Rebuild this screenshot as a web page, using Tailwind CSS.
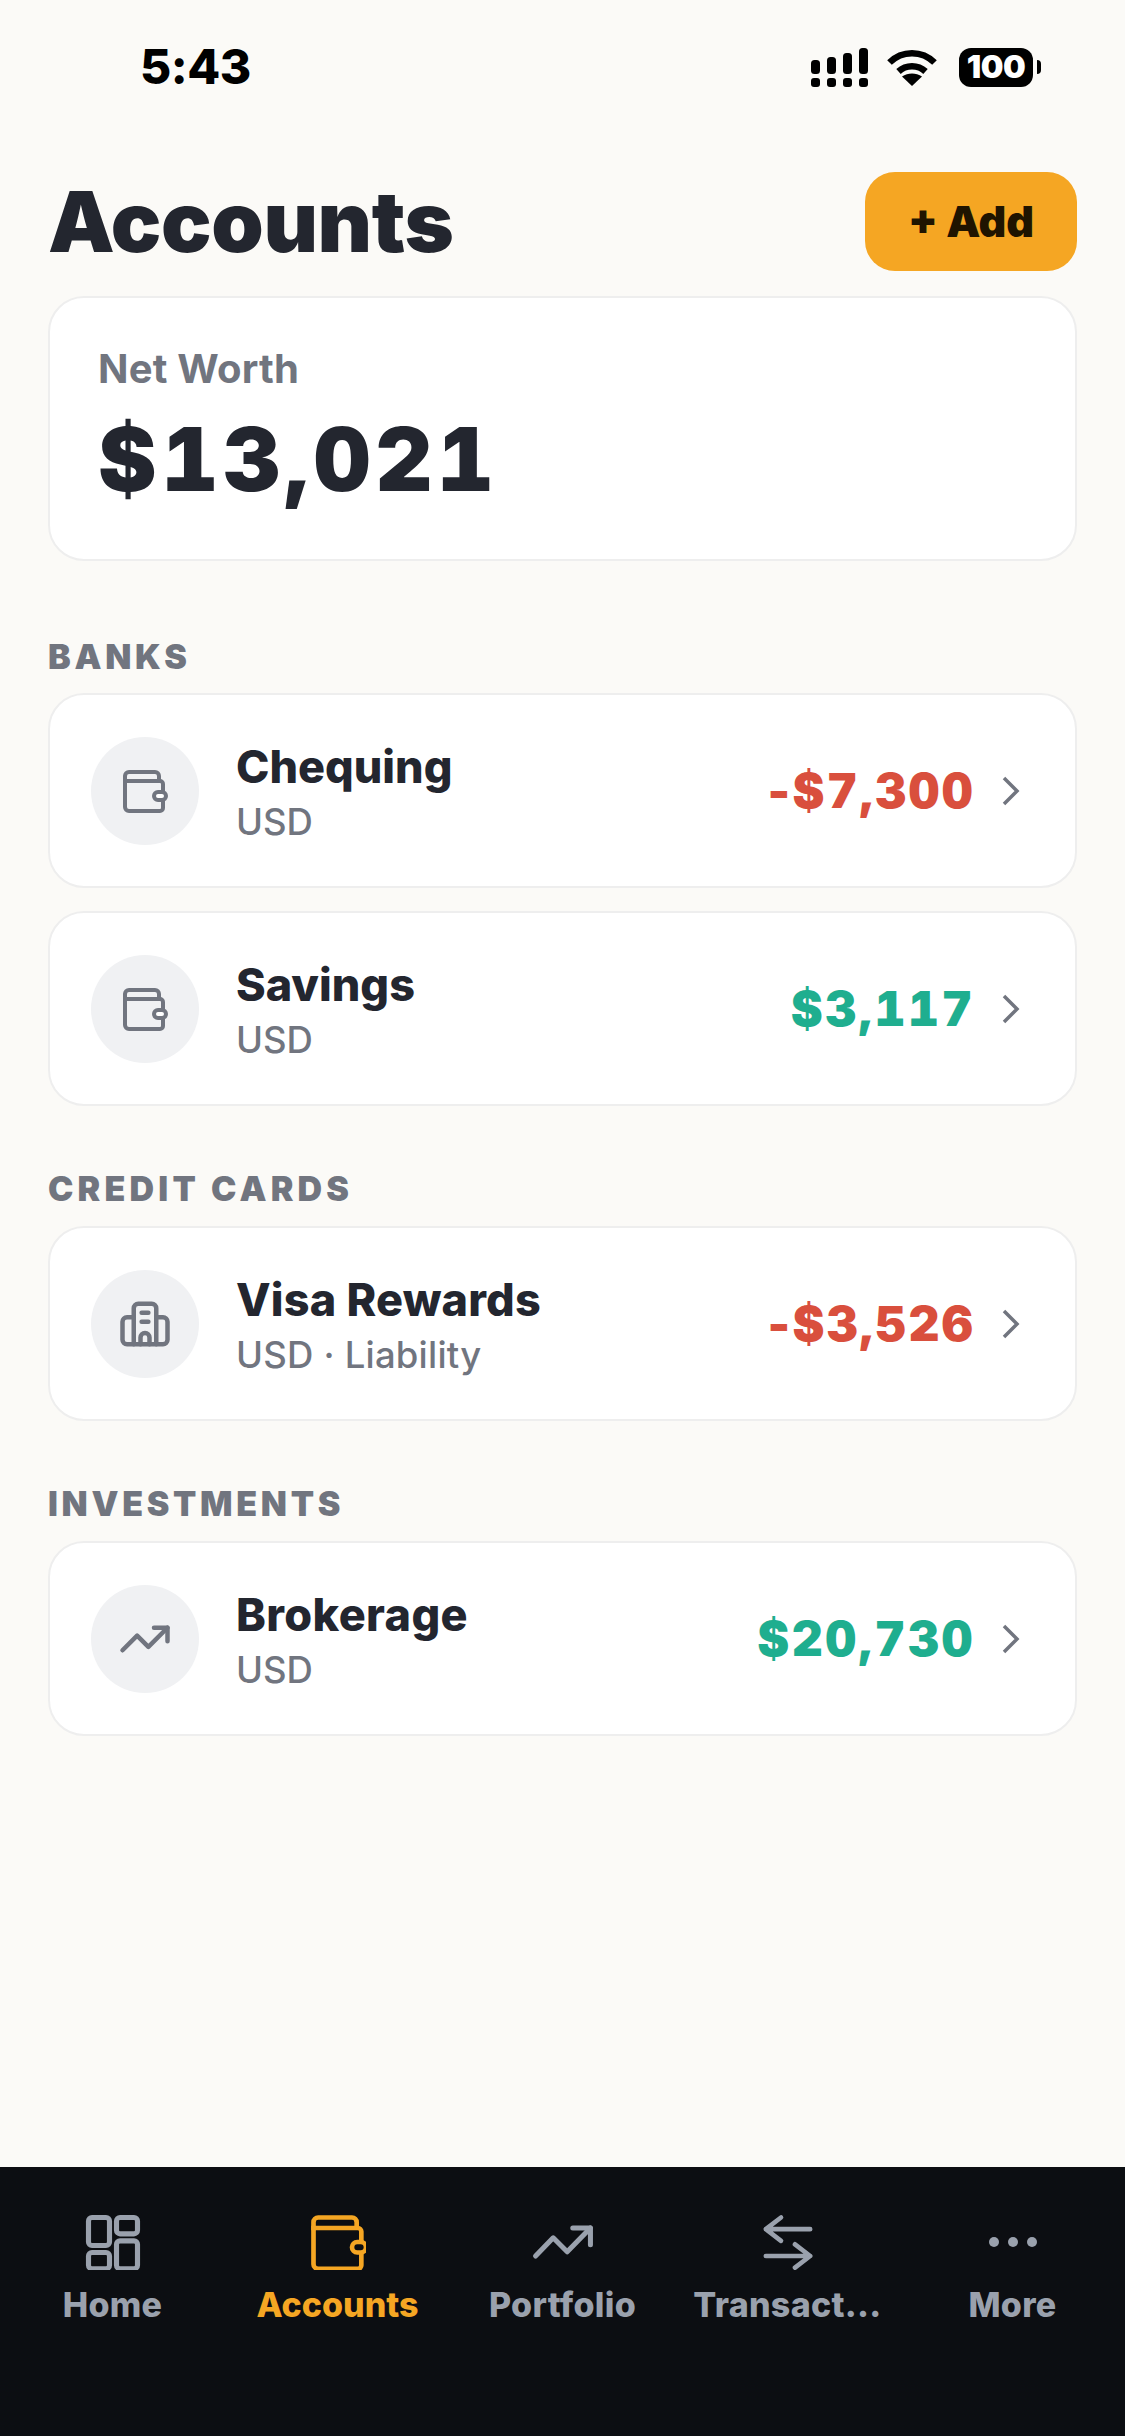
<!DOCTYPE html>
<html lang="en">
<head>
<meta charset="utf-8">
<title>Accounts</title>
<script src="https://cdn.jsdelivr.net/npm/@tailwindcss/browser@4"></script>
</head>
<body class="m-0">
<div class="w-[1125px] h-[2436px] flex flex-col bg-[#fbfaf7] font-['Inter',sans-serif] overflow-hidden">

  <!-- Status bar -->
  <div class="h-[134px] shrink-0 flex items-center justify-between pl-[140px] pr-[84px] text-black">
    <span class="text-[48px] font-extrabold leading-none tracking-[-0.5px]">5:43</span>
    <div class="flex items-center">
      <svg class="w-[57px] h-[39px]" viewBox="0 0 57 39" fill="currentColor">
        <rect x="0" y="12" width="9" height="14" rx="3.5"/><rect x="16" y="9" width="9" height="17" rx="3.5"/><rect x="32" y="5" width="9" height="21" rx="3.5"/><rect x="48" y="0" width="9" height="26" rx="3.5"/>
        <rect x="0" y="30" width="9" height="9" rx="3"/><rect x="16" y="30" width="9" height="9" rx="3"/><rect x="32" y="30" width="9" height="9" rx="3"/><rect x="48" y="30" width="9" height="9" rx="3"/>
      </svg>
      <svg class="w-[50px] h-[37px] ml-[19px]" viewBox="0 0 50 37" fill="none" stroke="currentColor" stroke-width="6.5">
        <path d="M2.5 13.5C15 1 35 1 47.5 13.5"/>
        <path d="M11.5 22.5C19 15.5 31 15.5 38.5 22.5"/>
        <path d="M25 37L15 27.5C21 23.5 29 23.5 35 27.5Z" fill="currentColor" stroke="none"/>
      </svg>
      <div class="ml-[22px] w-[74px] h-[39px] rounded-[12px] bg-black text-white flex items-center justify-center text-[32px] font-black leading-none tracking-[-0.5px]">100</div>
      <div class="ml-[4px] w-[4px] h-[14px] rounded-r-full bg-black"></div>
    </div>
  </div>

  <main class="flex-1 px-12">
    <!-- Title -->
    <div class="mt-[38px] h-[99px] flex items-center justify-between">
      <h1 class="text-[84px] font-black leading-none text-[#23262f] tracking-[-0.4px]">Accounts</h1>
      <button class="w-[212px] h-[99px] rounded-[30px] bg-[#f5a623] text-[#1f1400] text-[43px] font-black leading-none">+ Add</button>
    </div>

    <!-- Net worth -->
    <div class="mt-[25px] h-[265px] rounded-[36px] bg-white border-2 border-[#eeeeee] pl-[48px] pt-[48px]">
      <div class="text-[40px] font-bold leading-[46px] text-[#71757f] tracking-[0.2px]">Net Worth</div>
      <div class="mt-[17px] text-[88px] font-black leading-[100px] text-[#23262f] tracking-[5px] tabular-nums">$13,021</div>
    </div>

    <!-- Banks -->
    <h2 class="mt-[76px] h-[40px] text-[34px] font-black leading-[40px] tracking-[3.7px] text-[#71757f]">BANKS</h2>
    <div class="mt-[16px] flex flex-col gap-[23px]">
      <div class="h-[195px] rounded-[36px] bg-white border-2 border-[#eeeeee] flex items-center pl-[41px] pr-[55px]">
        <div class="w-[108px] h-[108px] rounded-full bg-[#f0f1f3] flex items-center justify-center text-[#71757f]">
          <svg class="w-[48px] h-[48px]" viewBox="0 0 24 24" fill="none" stroke="currentColor" stroke-width="2" stroke-linejoin="round">
            <path d="M2 7V4.5A2 2 0 0 1 4 2.5H17A2 2 0 0 1 19 4.5V7"/>
            <path d="M2 5V20A2 2 0 0 0 4 22H19.5A1.5 1.5 0 0 0 21 20.500V8.500A1.500 1.500 0 0 0 19.500 7H2"/>
            <rect x="16.500" y="12.500" width="6" height="4" rx="2" fill="#fff"/>
          </svg>
        </div>
        <div class="ml-[37px] flex-1 pt-[3px]">
          <div class="text-[45px] font-extrabold leading-[54px] text-[#23262f]">Chequing</div>
          <div class="mt-[6px] text-[36.5px] font-medium leading-[44px] text-[#71757f]">USD</div>
        </div>
        <div class="text-[48px] font-black leading-none tracking-[2.3px] tabular-nums text-[#d94f3d]"><span class="normal-nums">-</span>$7,300</div>
        <svg class="ml-[27px] w-[18px] h-[30px] text-[#71757f]" viewBox="0 0 18 30" fill="none" stroke="currentColor" stroke-width="3.500"><path d="M2 2L15 15L2 28"/></svg>
      </div>

      <div class="h-[195px] rounded-[36px] bg-white border-2 border-[#eeeeee] flex items-center pl-[41px] pr-[55px]">
        <div class="w-[108px] h-[108px] rounded-full bg-[#f0f1f3] flex items-center justify-center text-[#71757f]">
          <svg class="w-[48px] h-[48px]" viewBox="0 0 24 24" fill="none" stroke="currentColor" stroke-width="2" stroke-linejoin="round">
            <path d="M2 7V4.5A2 2 0 0 1 4 2.5H17A2 2 0 0 1 19 4.5V7"/>
            <path d="M2 5V20A2 2 0 0 0 4 22H19.5A1.5 1.5 0 0 0 21 20.500V8.500A1.500 1.500 0 0 0 19.500 7H2"/>
            <rect x="16.500" y="12.500" width="6" height="4" rx="2" fill="#fff"/>
          </svg>
        </div>
        <div class="ml-[37px] flex-1 pt-[3px]">
          <div class="text-[45px] font-extrabold leading-[54px] text-[#23262f]">Savings</div>
          <div class="mt-[6px] text-[36.5px] font-medium leading-[44px] text-[#71757f]">USD</div>
        </div>
        <div class="text-[48px] font-black leading-none tracking-[2.6px] tabular-nums text-[#1fae8f]">$3,117</div>
        <svg class="ml-[27px] w-[18px] h-[30px] text-[#71757f]" viewBox="0 0 18 30" fill="none" stroke="currentColor" stroke-width="3.500"><path d="M2 2L15 15L2 28"/></svg>
      </div>
    </div>

    <!-- Credit cards -->
    <h2 class="mt-[63px] h-[40px] text-[34px] font-black leading-[40px] tracking-[4.2px] text-[#71757f]">CREDIT CARDS</h2>
    <div class="mt-[17px] h-[195px] rounded-[36px] bg-white border-2 border-[#eeeeee] flex items-center pl-[41px] pr-[55px]">
      <div class="w-[108px] h-[108px] rounded-full bg-[#f0f1f3] flex items-center justify-center text-[#71757f]">
        <svg class="w-[54px] h-[54px]" viewBox="0 0 24 24" fill="none" stroke="currentColor" stroke-width="2" stroke-linecap="round" stroke-linejoin="round">
          <path d="M7 21V5A2 2 0 0 1 9 3H15A2 2 0 0 1 17 5V21"/>
          <path d="M7 9H4A2 2 0 0 0 2 11V19A2 2 0 0 0 4 21H20A2 2 0 0 0 22 19V11A2 2 0 0 0 20 9H17"/>
          <path d="M10.500 7H13.500M10.500 11H13.500M10 21V18A2 2 0 0 1 14 18V21"/>
        </svg>
      </div>
      <div class="ml-[37px] flex-1 pt-[3px]">
        <div class="text-[45px] font-extrabold leading-[54px] tracking-[0.2px] text-[#23262f]">Visa Rewards</div>
        <div class="mt-[6px] text-[36.5px] font-medium leading-[44px] tracking-[0.2px] text-[#71757f]">USD · Liability</div>
      </div>
      <div class="text-[48px] font-black leading-none tracking-[2.3px] tabular-nums text-[#d94f3d]"><span class="normal-nums">-</span>$3,526</div>
      <svg class="ml-[27px] w-[18px] h-[30px] text-[#71757f]" viewBox="0 0 18 30" fill="none" stroke="currentColor" stroke-width="3.500"><path d="M2 2L15 15L2 28"/></svg>
    </div>

    <!-- Investments -->
    <h2 class="mt-[63px] h-[40px] text-[34px] font-black leading-[40px] tracking-[3.7px] text-[#71757f]">INVESTMENTS</h2>
    <div class="mt-[17px] h-[195px] rounded-[36px] bg-white border-2 border-[#eeeeee] flex items-center pl-[41px] pr-[55px]">
      <div class="w-[108px] h-[108px] rounded-full bg-[#f0f1f3] flex items-center justify-center text-[#71757f]">
        <svg class="w-[54px] h-[54px]" viewBox="0 0 24 24" fill="none" stroke="currentColor" stroke-width="2" stroke-linecap="round" stroke-linejoin="round">
          <path d="M22 7L13.500 15.500L8.500 10.500L2 17"/>
          <path d="M16 7H22V13"/>
        </svg>
      </div>
      <div class="ml-[37px] flex-1 pt-[3px]">
        <div class="text-[45px] font-extrabold leading-[54px] tracking-[0.4px] text-[#23262f]">Brokerage</div>
        <div class="mt-[6px] text-[36.5px] font-medium leading-[44px] text-[#71757f]">USD</div>
      </div>
      <div class="text-[48px] font-black leading-none tracking-[2.6px] tabular-nums text-[#1fae8f]">$20,730</div>
      <svg class="ml-[27px] w-[18px] h-[30px] text-[#71757f]" viewBox="0 0 18 30" fill="none" stroke="currentColor" stroke-width="3.500"><path d="M2 2L15 15L2 28"/></svg>
    </div>
  </main>

  <!-- Bottom nav -->
  <nav class="h-[269px] shrink-0 bg-[#0c0e12] grid grid-cols-5 pt-[47px] text-[#9aa1ad]">
    <div class="flex flex-col items-center">
      <svg class="w-[56px] h-[56px]" viewBox="0 0 24 24" fill="none" stroke="currentColor" stroke-width="2.200" stroke-linejoin="round">
        <rect x="1.500" y="1.500" width="9" height="12" rx="1.500"/><rect x="13.500" y="1.500" width="9" height="7" rx="1.500"/><rect x="13.500" y="11.500" width="9" height="12" rx="1.500"/><rect x="1.500" y="16.500" width="9" height="7" rx="1.500"/>
      </svg>
      <span class="mt-[15px] text-[34px] font-extrabold leading-[40px] tracking-[0.3px]">Home</span>
    </div>
    <div class="flex flex-col items-center text-[#f5a623]">
      <svg class="w-[56px] h-[56px]" viewBox="0 0 24 24" fill="none" stroke="currentColor" stroke-width="2" stroke-linejoin="round">
        <path d="M1.500 7V3.500A2 2 0 0 1 3.500 1.500H18A2 2 0 0 1 20 3.500V6"/>
        <path d="M1.500 5V21.500A2 2 0 0 0 3.500 23.500H20.500A1.500 1.500 0 0 0 22 22V7.500A1.500 1.500 0 0 0 20.500 6H1.500"/>
        <rect x="18" y="12" width="6" height="4.500" rx="2.250" fill="#0c0e12"/>
      </svg>
      <span class="mt-[15px] text-[34px] font-extrabold leading-[40px]">Accounts</span>
    </div>
    <div class="flex flex-col items-center">
      <svg class="w-[56px] h-[56px] overflow-visible" viewBox="2 2 20 20" fill="none" stroke="currentColor" stroke-width="1.800" stroke-linecap="round" stroke-linejoin="round">
        <path d="M21.800 7L13.500 15.500L8.500 10.500L2.200 17"/>
        <path d="M15.500 7H21.800V13"/>
      </svg>
      <span class="mt-[15px] text-[34px] font-extrabold leading-[40px] tracking-[0.3px]">Portfolio</span>
    </div>
    <div class="flex flex-col items-center">
      <svg class="w-[56px] h-[56px]" viewBox="0 0 24 24" fill="none" stroke="currentColor" stroke-width="2" stroke-linecap="round" stroke-linejoin="round">
        <path d="M9 1.500L2.500 6.500L9 11.500M2.500 6.500H21.500"/>
        <path d="M2.500 18H21.500M15 13L21.500 18L15 23"/>
      </svg>
      <span class="mt-[15px] text-[34px] font-extrabold leading-[40px] tracking-[0.3px]">Transact...</span>
    </div>
    <div class="flex flex-col items-center">
      <svg class="w-[56px] h-[56px]" viewBox="0 0 56 56" fill="currentColor">
        <circle cx="9" cy="28" r="5"/><circle cx="28" cy="28" r="5"/><circle cx="47" cy="28" r="5"/>
      </svg>
      <span class="mt-[15px] text-[34px] font-extrabold leading-[40px] tracking-[0.3px]">More</span>
    </div>
  </nav>

</div>
</body>
</html>
